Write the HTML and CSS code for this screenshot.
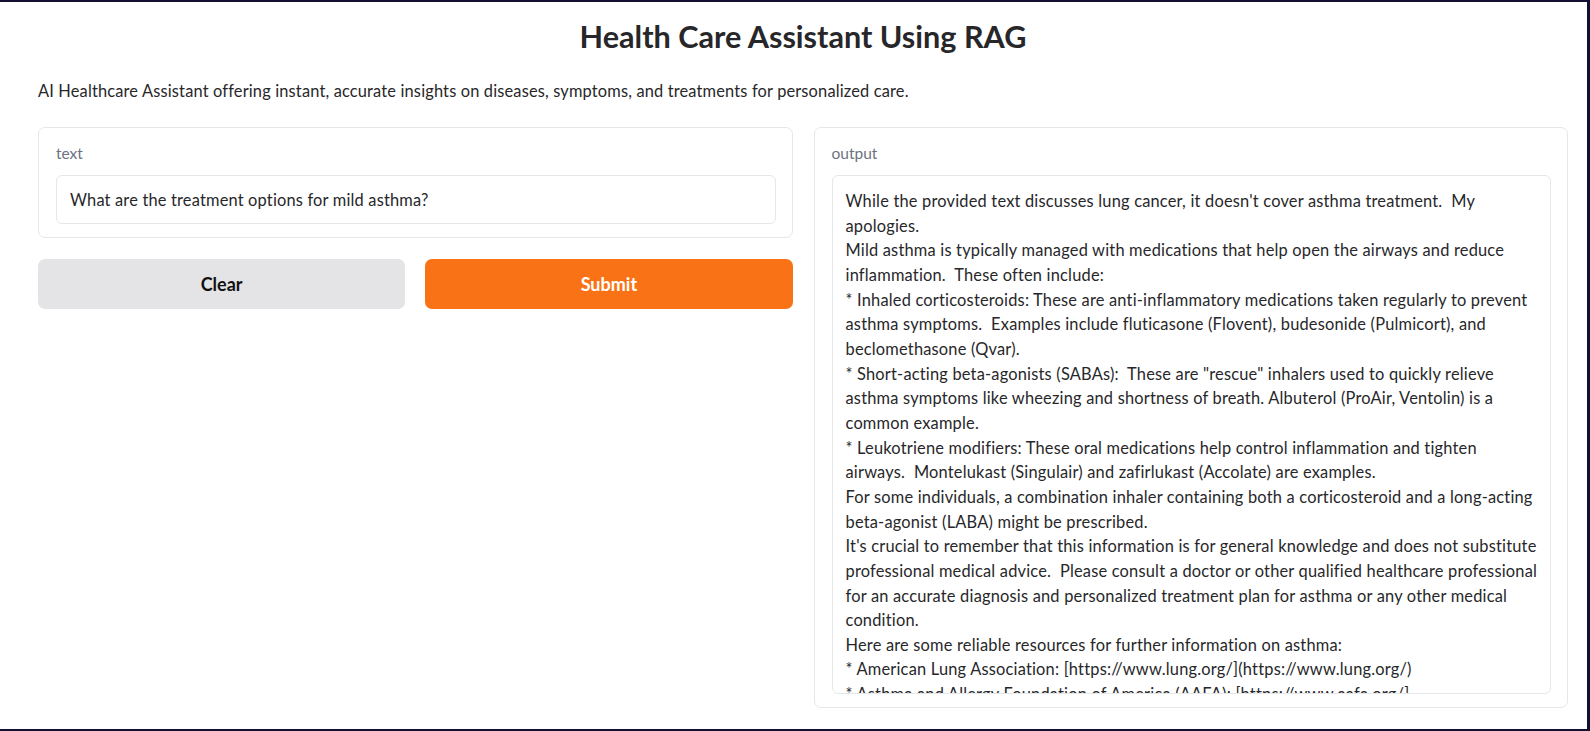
FILE: index.html
```html
<!DOCTYPE html>
<html lang="en">
<head>
<meta charset="utf-8">
<title>Health Care Assistant Using RAG</title>
<link rel="stylesheet" href="styles.css">
</head>
<body>
<div class="frame">
  <main class="page">
    <h1 class="title">Health Care Assistant Using RAG</h1>
    <p class="desc">AI Healthcare Assistant offering instant, accurate insights on diseases, symptoms, and treatments for personalized care.</p>
    <div class="columns">
      <div class="col-left">
        <div class="block block-input">
          <label class="label">text</label>
          <div class="input">What are the treatment options for mild asthma?</div>
        </div>
        <div class="buttons">
          <button class="btn btn-secondary">Clear</button>
          <button class="btn btn-primary">Submit</button>
        </div>
      </div>
      <div class="block block-output">
        <label class="label">output</label>
        <div class="output"><div class="output-text">While the provided text discusses lung cancer, it doesn't cover asthma treatment.  My
apologies.
Mild asthma is typically managed with medications that help open the airways and reduce
inflammation.  These often include:
* Inhaled corticosteroids: These are anti-inflammatory medications taken regularly to prevent
asthma symptoms.  Examples include fluticasone (Flovent), budesonide (Pulmicort), and
beclomethasone (Qvar).
* Short-acting beta-agonists (SABAs):  These are "rescue" inhalers used to quickly relieve
asthma symptoms like wheezing and shortness of breath. Albuterol (ProAir, Ventolin) is a
common example.
* Leukotriene modifiers: These oral medications help control inflammation and tighten
airways.  Montelukast (Singulair) and zafirlukast (Accolate) are examples.
For some individuals, a combination inhaler containing both a corticosteroid and a long-acting
beta-agonist (LABA) might be prescribed.
It's crucial to remember that this information is for general knowledge and does not substitute
professional medical advice.  Please consult a doctor or other qualified healthcare professional
for an accurate diagnosis and personalized treatment plan for asthma or any other medical
condition.
Here are some reliable resources for further information on asthma:
* American Lung Association: [https://www.lung.org/](https://www.lung.org/)
* Asthma and Allergy Foundation of America (AAFA): [https://www.aafa.org/]</div></div>
      </div>
    </div>
  </main>
</div>
</body>
</html>
```

FILE: styles.css
```css
* { box-sizing: border-box; }

html, body {
  margin: 0;
  padding: 0;
  background: #ffffff;
}

body {
  font-family: Lato, "Liberation Sans", sans-serif;
  color: #27272a;
}

.frame {
  width: 1590px;
  height: 731px;
  border-top: 2px solid #140f30;
  border-right: 3px solid #140f30;
  border-bottom: 2px solid #140f30;
  overflow: hidden;
  background: #ffffff;
}

.page {
  padding: 15px 19px 0 38px;
}

.title {
  margin: 0;
  text-align: center;
  font-size: 30.6px;
  line-height: 40px;
  font-weight: 700;
  color: #27272a;
}

.desc {
  margin: 22px 0 0 0;
  font-size: 16.4px;
  letter-spacing: 0.16px;
  line-height: 24px;
  color: #27272a;
}

.columns {
  margin-top: 24px;
  display: grid;
  grid-template-columns: minmax(0, 1fr) minmax(0, 1fr);
  column-gap: 21px;
  align-items: start;
}

.block {
  border: 1px solid #e5e7eb;
  border-radius: 7px;
  background: #ffffff;
  padding: 15px 16px 13px 17px;
}

.label {
  display: block;
  font-size: 15.5px;
  line-height: 20px;
  color: #6b7280;
  margin-bottom: 12px;
}

.input {
  height: 49px;
  border: 1px solid #e5e7eb;
  border-radius: 6px;
  padding: 0 13px;
  font-size: 16.4px;
  letter-spacing: 0.18px;
  line-height: 47px;
  color: #27272a;
}

.buttons {
  margin-top: 21px;
  display: grid;
  grid-template-columns: minmax(0, 1fr) minmax(0, 1fr);
  column-gap: 20px;
}

.btn {
  height: 50px;
  border: none;
  border-radius: 7px;
  font-family: Lato, "Liberation Sans", sans-serif;
  font-size: 18px;
  font-weight: 700;
}

.btn-secondary {
  background: #e4e4e7;
  color: #111111;
}

.btn-primary {
  background: #f97316;
  color: #ffffff;
}

.block-output {
  height: 581px;
  display: flex;
  flex-direction: column;
  padding-bottom: 13px;
  min-width: 0;
}

.output {
  flex: 1;
  border: 1px solid #e5e7eb;
  border-radius: 6px;
  overflow: hidden;
  padding: 13px 13px 0 13px;
}

.output-text {
  white-space: pre;
  font-size: 16.4px;
  letter-spacing: 0.2px;
  line-height: 24.65px;
  color: #27272a;
}
```
